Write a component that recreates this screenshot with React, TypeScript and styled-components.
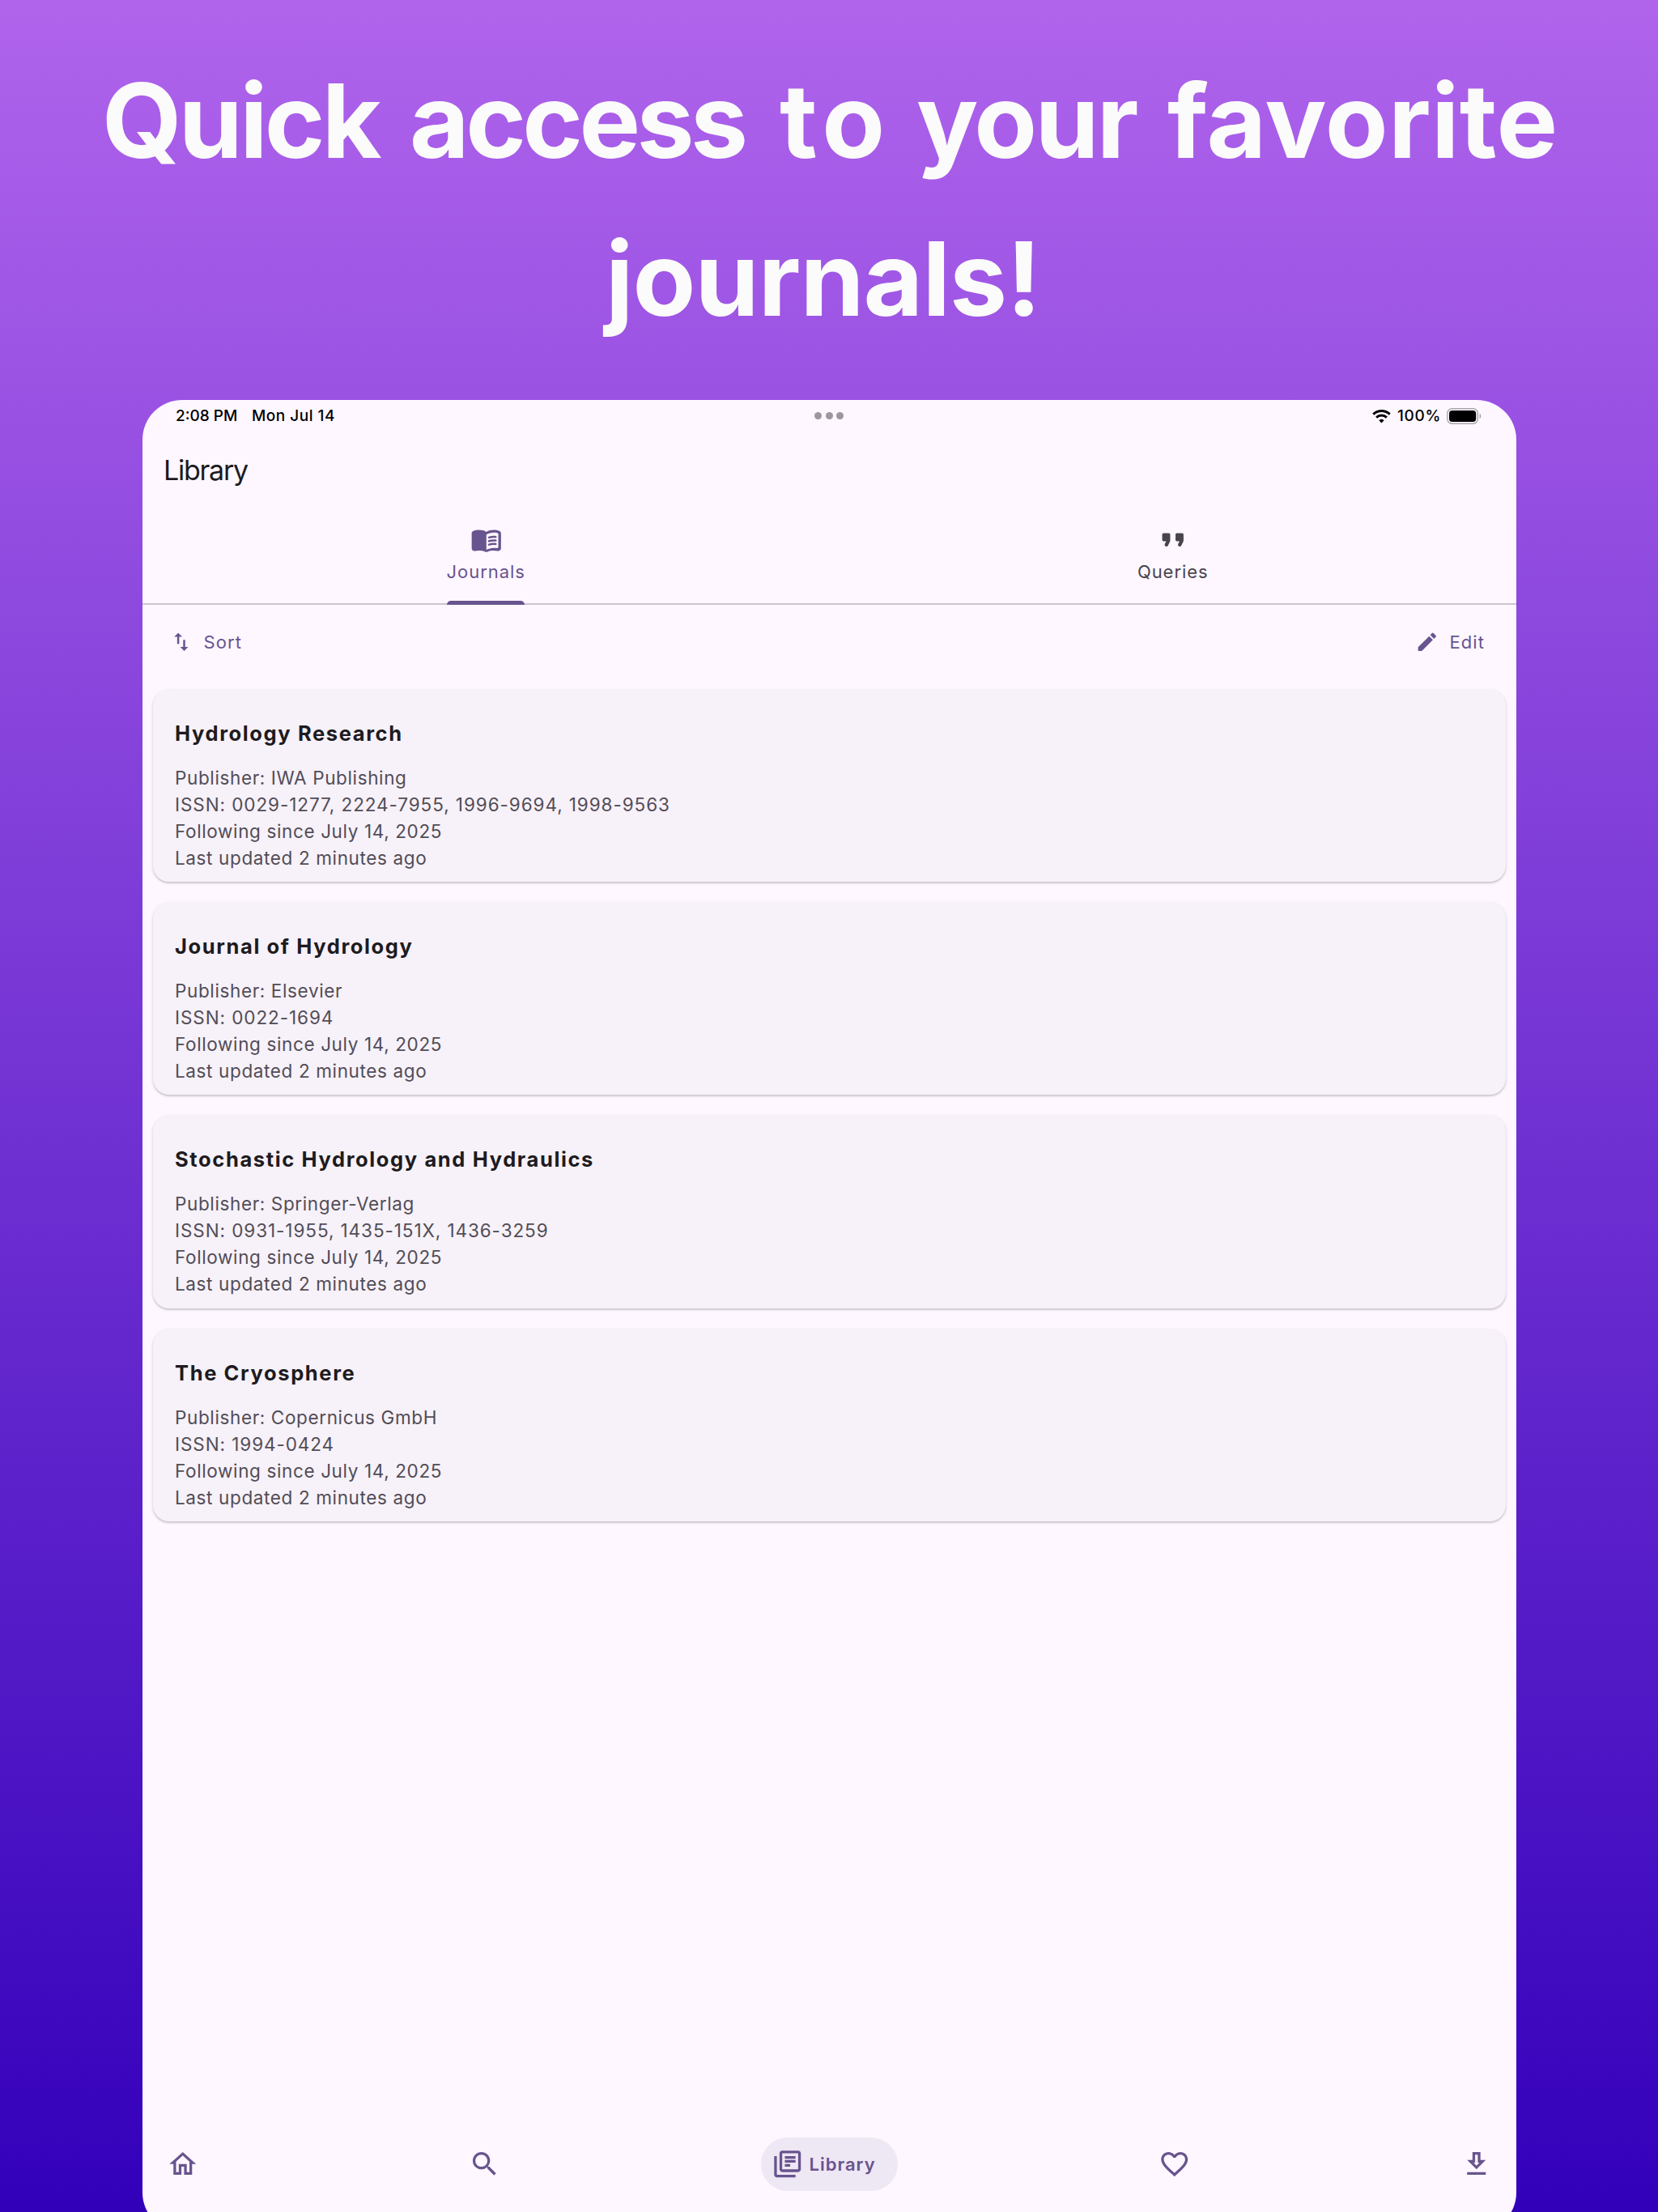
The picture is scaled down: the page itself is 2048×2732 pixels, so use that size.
import React from "react";
import styled, { createGlobalStyle } from "styled-components";
import {
  MdEdit,
  MdFavoriteBorder,
  MdImportExport,
  MdOutlineHome,
  MdOutlineLibraryBooks,
  MdSearch,
} from "react-icons/md";

const color = {
  surface: "#fef7ff",
  card: "#f7f1f9",
  primary: "#68548e",
  onSurface: "#1d1b20",
  muted: "#49454e",
  body: "#514d56",
  divider: "#cbc5cf",
  pill: "#eee7f4",
};

const GlobalStyle = createGlobalStyle`
  * { box-sizing: border-box; }
  body {
    margin: 0;
    font-family: Inter, "Liberation Sans", sans-serif;
  }
`;

const Page = styled.div`
  width: 2048px;
  height: 2732px;
  overflow: hidden;
  background: linear-gradient(180deg, #b064ec 0%, #3300ba 100%);
`;

const Headline = styled.h1`
  margin: 0;
  height: 494px;
  padding-top: 52px;
  font-size: 127px;
  font-weight: 700;
  line-height: 195px;
  color: #fbfbfb;
`;

const HeadlineRow = styled.span<{ $start: number; $columns: string }>`
  display: grid;
  grid-template-columns: ${(p) => p.$columns};
  padding-left: ${(p) => p.$start}px;
  white-space: nowrap;
`;

const Word = styled.span<{ $tracking: number }>`
  letter-spacing: ${(p) => p.$tracking}px;
`;

const Tablet = styled.main`
  display: flex;
  flex-direction: column;
  width: 1697px;
  height: 2263px;
  margin-left: 176px;
  border-radius: 49px;
  overflow: hidden;
  background: ${color.surface};
`;

const StatusBar = styled.div`
  display: grid;
  grid-template-columns: 1fr auto 1fr;
  align-items: center;
  height: 40px;
  padding: 0 42px 0 41px;
  font-size: 19px;
  font-weight: 500;
  line-height: 38px;
  color: #000;
`;

const StatusGroup = styled.div<{ $end?: boolean }>`
  display: flex;
  align-items: center;
  justify-content: ${(p) => (p.$end ? "flex-end" : "flex-start")};
`;

const Clock = styled.span`
  width: 94px;
`;

const DateLabel = styled.span`
  letter-spacing: 0.5px;
`;

const BatteryLabel = styled.span`
  margin: 0 7px 0 8px;
  letter-spacing: 0.7px;
`;

const Dots = styled.div`
  display: flex;
  gap: 4.2px;
  margin-bottom: 1px;
`;

const Dot = styled.i`
  width: 9px;
  height: 9px;
  border-radius: 50%;
  background: #9c969f;
`;

const AppBar = styled.header`
  display: flex;
  align-items: center;
  height: 92px;
  padding-left: 26px;
  font-size: 34px;
  letter-spacing: -1.25px;
  color: ${color.onSurface};
`;

const Tabs = styled.div`
  display: grid;
  grid-template-columns: 1fr 1fr;
  height: 121px;
  border-bottom: 2px solid ${color.divider};
`;

const Tab = styled.div<{ $active?: boolean }>`
  display: flex;
  flex-direction: column;
  align-items: center;
  height: 121px;
  padding-top: 20.5px;
  font-size: 22px;
  font-weight: 400;
  line-height: 30px;
  letter-spacing: 0.95px;
  color: ${(p) => (p.$active ? color.primary : color.muted)};

  svg {
    width: 39.5px;
    height: 39.5px;
    margin-bottom: 5px;
    fill: currentColor;
  }
`;

const Indicator = styled.span`
  width: 96px;
  height: 5px;
  margin-top: auto;
  border-radius: 5px 5px 0 0;
  background: ${color.primary};
`;

const Toolbar = styled.div`
  display: flex;
  justify-content: space-between;
  height: 92px;
  padding: 0 39px 0 33px;
`;

const TextButton = styled.button`
  display: flex;
  align-items: center;
  gap: 13px;
  padding: 0;
  border: 0;
  background: none;
  font: 400 22px Inter, "Liberation Sans", sans-serif;
  letter-spacing: 1.1px;
  color: ${color.primary};

  svg {
    width: 29.6px;
    height: 29.6px;
  }
`;

const CardList = styled.section`
  display: flex;
  flex-direction: column;
  gap: 26px;
  padding: 13px 13px 0;
`;

const Card = styled.article`
  height: 237.2px;
  padding: 37px 27px 0;
  border-radius: 20px;
  background: ${color.card};
  box-shadow: 0 2px 2px rgba(0, 0, 0, 0.13), 0 1px 4px rgba(0, 0, 0, 0.12);
`;

const CardTitle = styled.h2`
  margin: 0 0 21px;
  font-size: 25.5px;
  font-weight: 700;
  line-height: 34px;
  letter-spacing: 1.62px;
  color: ${color.onSurface};
`;

const CardLine = styled.p<{ $numeric?: boolean }>`
  margin: 0;
  font-size: 22.5px;
  line-height: 33px;
  letter-spacing: ${(p) => (p.$numeric ? 0.92 : 0.63)}px;
  color: ${color.body};
`;

const BottomNav = styled.nav`
  display: flex;
  align-items: center;
  justify-content: space-between;
  height: 66px;
  margin: auto 0 51px;
  padding: 0 17.3px;
  color: ${color.primary};

  svg {
    flex: none;
    width: 39.5px;
    height: 39.5px;
    fill: currentColor;
  }
`;

const NavItem = styled.div`
  display: flex;
  justify-content: center;
  width: 64px;
`;

const ActiveNavItem = styled.div`
  display: flex;
  align-items: center;
  gap: 6.5px;
  width: 169px;
  height: 66px;
  padding-left: 13.5px;
  border-radius: 33px;
  background: ${color.pill};
  font-size: 22px;
  font-weight: 600;
  letter-spacing: 1px;
`;

const BookIcon = () => (
  <svg viewBox="0 0 24 24">
    <path d="M17.5 4.5c-1.95 0-4.05.4-5.5 1.5-1.45-1.1-3.55-1.5-5.5-1.5-1.45 0-2.99.22-4.28.79C1.49 5.62 1 6.33 1 7.14v11.28c0 1.3 1.22 2.26 2.48 1.94.98-.25 2.02-.36 3.02-.36 1.56 0 3.22.26 4.56.92.6.3 1.28.3 1.87 0 1.34-.67 3-.92 4.56-.92 1 0 2.04.11 3.02.36 1.26.33 2.48-.63 2.48-1.94V7.14c0-.81-.49-1.52-1.22-1.85-1.28-.57-2.82-.79-4.27-.79zM21 17.23c0 .63-.58 1.09-1.2.98-.75-.14-1.53-.2-2.3-.2-1.7 0-4.15.65-5.5 1.5V8c1.35-.85 3.8-1.5 5.5-1.5.92 0 1.83.09 2.7.28.46.1.8.51.8.98z" />
    {[0, 2.66, 5.32].map((dy) => (
      <path
        key={dy}
        transform={`translate(0 ${dy})`}
        d="M13.98 11.01c-.32 0-.61-.2-.71-.52-.13-.39.09-.82.48-.94 1.54-.5 3.53-.66 5.36-.45.41.05.71.42.66.83-.05.41-.42.71-.83.66-1.62-.19-3.39-.04-4.73.39-.08.01-.16.03-.23.03z"
      />
    ))}
  </svg>
);

const QuoteIcon = () => (
  <svg viewBox="0 0 24 24">
    {[0, 10].map((dx) => (
      <path
        key={dx}
        transform={`translate(${dx} 0)`}
        d="M7.17 17c.51 0 .98-.29 1.2-.74l1.42-2.84c.14-.28.21-.58.21-.89V8c0-.55-.45-1-1-1H5c-.55 0-1 .45-1 1v4c0 .55.45 1 1 1h2l-1.03 2.06c-.45.89.2 1.94 1.2 1.94z"
      />
    ))}
  </svg>
);

const DownloadIcon = () => (
  <svg viewBox="0 0 24 24">
    <path d="M19 9h-4V3H9v6H5l7 7 7-7zm-8 2V5h2v6h1.17L12 13.17 9.83 11H11zm-6 7h14v2H5z" />
  </svg>
);

const WifiIcon = () => (
  <svg width="23" height="17" viewBox="0 0 23 17" fill="none" stroke="#000">
    <path d="M1.3 5.6a14.6 14.6 0 0 1 20.4 0" strokeWidth="3" />
    <path d="M5.1 9.6a9.2 9.2 0 0 1 12.8 0" strokeWidth="2.9" />
    <path d="M11.5 16.4 8.4 13.3a4.5 4.5 0 0 1 6.2 0z" fill="#000" stroke="none" />
  </svg>
);

const BatteryIcon = () => (
  <svg width="44" height="20" viewBox="0 0 44 20">
    <rect x="0.8" y="0.8" width="37.6" height="18.4" rx="5.6" fill="none" stroke="#a9a4ab" strokeWidth="1.4" />
    <rect x="3" y="3" width="33.2" height="14" rx="3.8" fill="#000" />
    <path d="M40.6 6.8c2.3 1 2.3 5.4 0 6.4z" fill="#a9a4ab" />
  </svg>
);

const journals = [
  {
    title: "Hydrology Research",
    publisher: "IWA Publishing",
    issn: "0029-1277, 2224-7955, 1996-9694, 1998-9563",
  },
  { title: "Journal of Hydrology", publisher: "Elsevier", issn: "0022-1694" },
  {
    title: "Stochastic Hydrology and Hydraulics",
    publisher: "Springer-Verlag",
    issn: "0931-1955, 1435-151X, 1436-3259",
  },
  { title: "The Cryosphere", publisher: "Copernicus GmbH", issn: "1994-0424" },
];

export default function App() {
  return (
    <Page>
      <GlobalStyle />
      <Headline>
        <HeadlineRow $start={126} $columns="380px 457px 169px 310px auto">
          <Word $tracking={-3.8}>Quick</Word>
          <Word $tracking={-4.6}>access</Word>
          <Word $tracking={7}>to</Word>
          <Word $tracking={-2.8}>your</Word>
          <Word $tracking={0.4}>favorite</Word>
        </HeadlineRow>
        <HeadlineRow $start={748} $columns="auto">
          <Word $tracking={-0.9}>journals!</Word>
        </HeadlineRow>
      </Headline>
      <Tablet>
        <StatusBar>
          <StatusGroup>
            <Clock>2:08 PM</Clock>
            <DateLabel>Mon Jul 14</DateLabel>
          </StatusGroup>
          <Dots>
            <Dot />
            <Dot />
            <Dot />
          </Dots>
          <StatusGroup $end>
            <WifiIcon />
            <BatteryLabel>100%</BatteryLabel>
            <BatteryIcon />
          </StatusGroup>
        </StatusBar>
        <AppBar>Library</AppBar>
        <Tabs>
          <Tab $active>
            <BookIcon />
            Journals
            <Indicator />
          </Tab>
          <Tab>
            <QuoteIcon />
            Queries
          </Tab>
        </Tabs>
        <Toolbar>
          <TextButton>
            <MdImportExport />
            Sort
          </TextButton>
          <TextButton>
            <MdEdit />
            Edit
          </TextButton>
        </Toolbar>
        <CardList>
          {journals.map((j) => (
            <Card key={j.title}>
              <CardTitle>{j.title}</CardTitle>
              <CardLine>Publisher: {j.publisher}</CardLine>
              <CardLine $numeric>ISSN: {j.issn}</CardLine>
              <CardLine>Following since July 14, 2025</CardLine>
              <CardLine>Last updated 2 minutes ago</CardLine>
            </Card>
          ))}
        </CardList>
        <BottomNav>
          <NavItem>
            <MdOutlineHome />
          </NavItem>
          <NavItem>
            <MdSearch />
          </NavItem>
          <ActiveNavItem>
            <MdOutlineLibraryBooks />
            Library
          </ActiveNavItem>
          <NavItem>
            <MdFavoriteBorder />
          </NavItem>
          <NavItem>
            <DownloadIcon />
          </NavItem>
        </BottomNav>
      </Tablet>
    </Page>
  );
}
